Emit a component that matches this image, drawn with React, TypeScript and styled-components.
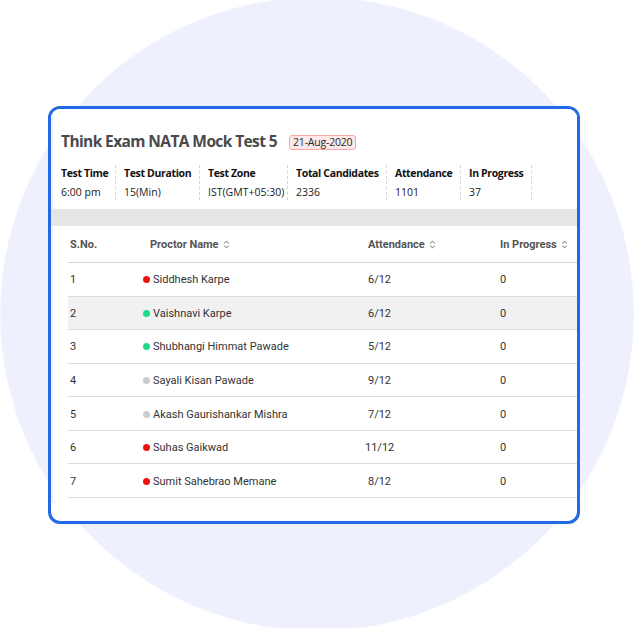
import React from "react";
import styled, { createGlobalStyle } from "styled-components";

const GlobalStyle = createGlobalStyle`
  html, body { margin: 0; padding: 0; background: #ffffff; }
  body { font-family: "Open Sans", "Noto Sans", sans-serif; }
  * { box-sizing: border-box; }
`;

const Page = styled.div`
  width: 634px;
  height: 628px;
  overflow: hidden;
  padding: 106px 0 0 48px;
  background: radial-gradient(circle at 317px 314px, #eef1fd 316px, #ffffff 317.5px);
`;

const Card = styled.div`
  width: 532px;
  height: 418px;
  border: 3px solid #2169e6;
  border-radius: 12px;
  background: #ffffff;
  overflow: hidden;
  padding-bottom: 18px;
  display: flex;
  flex-direction: column;
`;

const Body = styled.div`
  flex: 1;
  background: #f2f2f5;
  display: flex;
  flex-direction: column;
`;

const HeaderPanel = styled.div`
  margin-left: 2px;
  height: 100px;
  background: #ffffff;
  border-bottom-left-radius: 5px;
  padding: 21px 0 0 8px;
`;

const TitleRow = styled.div`
  display: flex;
  align-items: center;
  gap: 12px;
  height: 22px;
`;

const Title = styled.h1`
  margin: 0;
  font-family: "Open Sans", sans-serif;
  font-weight: 700;
  font-size: 15.5px;
  letter-spacing: -0.6px;
  line-height: 22px;
  color: #4a4a4a;
`;

const DateBadge = styled.span`
  display: inline-block;
  height: 15px;
  padding: 0 3px;
  font-family: "Open Sans", sans-serif;
  font-size: 10.5px;
  letter-spacing: -0.2px;
  line-height: 13px;
  color: #2a2a2a;
  background: #fde9e9;
  border: 1px solid #f6a9a9;
  border-radius: 3px;
  margin-top: 2px;
`;

const StatsRow = styled.div`
  display: flex;
  margin-top: 13px;
`;

const Stat = styled.div<{ $w: number; $first?: boolean }>`
  width: ${(p) => p.$w}px;
  padding-left: ${(p) => (p.$first ? 0 : 8)}px;
  border-right: 1px dashed #d4d4d4;
  height: 35px;
  white-space: nowrap;
`;

const StatLabel = styled.div`
  font-family: "Open Sans", sans-serif;
  font-weight: 700;
  font-size: 10.5px;
  letter-spacing: -0.35px;
  line-height: 16px;
  color: #111111;
`;

const StatValue = styled.div`
  margin-top: 3px;
  font-family: "Open Sans", sans-serif;
  font-size: 10.5px;
  line-height: 16px;
  color: #222222;
`;

const Band = styled.div`
  height: 17px;
  background: #e6e6e6;
`;

const TablePanel = styled.div`
  margin-left: 2px;
  flex: 1;
  background: #ffffff;
  border-bottom-left-radius: 5px;
  padding-left: 15px;
`;

const Row = styled.div<{ $head?: boolean; $shade?: boolean }>`
  display: grid;
  grid-template-columns: 75px 222px 135px 1fr;
  align-items: center;
  height: ${(p) => (p.$head ? "37px" : "33.57px")};
  padding-top: ${(p) => (p.$head ? 0 : 1)}px;
  border-bottom: 1px solid ${(p) => (p.$head ? "#d6d6d6" : "#dcdcdc")};
  background: ${(p) => (p.$shade ? "#f1f1f1" : "transparent")};
  font-family: Roboto, "Liberation Sans", sans-serif;
  font-size: 11px;
  color: ${(p) => (p.$head ? "#555555" : "#333333")};
  font-weight: ${(p) => (p.$head ? 700 : 400)};
`;

const Cell = styled.div<{ $pl?: number }>`
  padding-left: ${(p) => p.$pl ?? 0}px;
  display: flex;
  align-items: center;
  white-space: nowrap;
`;

const CenterVal = styled.span`
  display: inline-block;
  width: 29px;
  text-align: center;
`;

const Dot = styled.span<{ $c: string }>`
  width: 7px;
  height: 7px;
  border-radius: 50%;
  background: ${(p) => p.$c};
  margin-right: 3px;
  flex: none;
`;

const SortIcon = () => (
  <svg width="7" height="9" viewBox="0 0 7 9" style={{ marginLeft: 4 }}>
    <path d="M1.2 3.4 L3.5 1.2 L5.8 3.4" fill="none" stroke="#9a9a9a" strokeWidth="1.1" />
    <path d="M1.2 5.6 L3.5 7.8 L5.8 5.6" fill="none" stroke="#9a9a9a" strokeWidth="1.1" />
  </svg>
);

const stats = [
  { label: "Test Time", value: "6:00 pm", w: 55 },
  { label: "Test Duration", value: "15(Min)", w: 84 },
  { label: "Test Zone", value: "IST(GMT+05:30)", w: 88 },
  { label: "Total Candidates", value: "2336", w: 99 },
  { label: "Attendance", value: "1101", w: 74 },
  { label: "In Progress", value: "37", w: 71 },
];

const colors = { red: "#f01010", green: "#1fd98b", gray: "#cccccc" };

const rows = [
  { n: 1, name: "Siddhesh Karpe", c: colors.red, att: "6/12" },
  { n: 2, name: "Vaishnavi Karpe", c: colors.green, att: "6/12" },
  { n: 3, name: "Shubhangi Himmat Pawade", c: colors.green, att: "5/12" },
  { n: 4, name: "Sayali Kisan Pawade", c: colors.gray, att: "9/12" },
  { n: 5, name: "Akash Gaurishankar Mishra", c: colors.gray, att: "7/12" },
  { n: 6, name: "Suhas Gaikwad", c: colors.red, att: "11/12" },
  { n: 7, name: "Sumit Sahebrao Memane", c: colors.red, att: "8/12" },
];

export default function App() {
  return (
    <>
      <GlobalStyle />
      <Page>
        <Card>
          <Body>
            <HeaderPanel>
              <TitleRow>
                <Title>Think Exam NATA Mock Test 5</Title>
                <DateBadge>21-Aug-2020</DateBadge>
              </TitleRow>
              <StatsRow>
                {stats.map((s, i) => (
                  <Stat key={s.label} $w={s.w} $first={i === 0}>
                    <StatLabel>{s.label}</StatLabel>
                    <StatValue>{s.value}</StatValue>
                  </Stat>
                ))}
              </StatsRow>
            </HeaderPanel>
            <Band />
            <TablePanel>
              <Row $head>
                <Cell $pl={2}>S.No.</Cell>
                <Cell $pl={7}>
                  Proctor Name
                  <SortIcon />
                </Cell>
                <Cell $pl={3}>
                  Attendance
                  <SortIcon />
                </Cell>
                <Cell>
                  In Progress
                  <SortIcon />
                </Cell>
              </Row>
              {rows.map((r) => (
                <Row key={r.n} $shade={r.n === 2}>
                  <Cell $pl={2}>{r.n}</Cell>
                  <Cell>
                    <Dot $c={r.c} />
                    {r.name}
                  </Cell>
                  <Cell>
                    <CenterVal>{r.att}</CenterVal>
                  </Cell>
                  <Cell>0</Cell>
                </Row>
              ))}
            </TablePanel>
          </Body>
        </Card>
      </Page>
    </>
  );
}
